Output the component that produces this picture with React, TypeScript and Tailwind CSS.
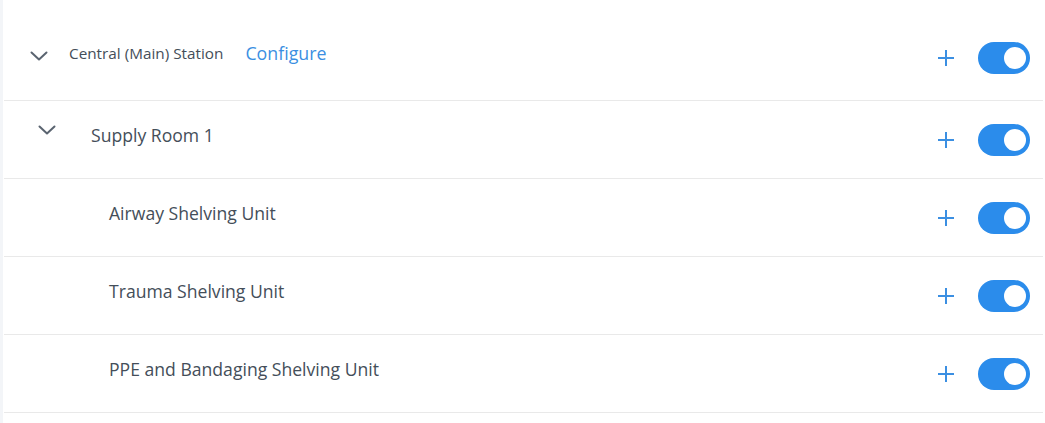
import { useState } from 'react';

type Unit = { id: string; name: string };

const units: Unit[] = [
  { id: 'airway', name: 'Airway Shelving Unit' },
  { id: 'trauma', name: 'Trauma Shelving Unit' },
  { id: 'ppe', name: 'PPE and Bandaging Shelving Unit' },
];

function Chevron({ className }: { className?: string }) {
  return (
    <svg width="18" height="10" viewBox="0 0 18 10" className={className} fill="none">
      <path d="M1.5 1.5 L9 8.5 L16.5 1.5" stroke="#5a6470" strokeWidth="2" strokeLinecap="round" strokeLinejoin="round" />
    </svg>
  );
}

function Plus() {
  return (
    <button className="w-[18px] h-[18px] flex items-center justify-center">
      <svg width="18" height="18" viewBox="0 0 18 18" fill="none">
        <path d="M9 1 V17 M1 9 H17" stroke="#3b8fe2" strokeWidth="2" />
      </svg>
    </button>
  );
}

function Toggle({ on, onChange }: { on: boolean; onChange: () => void }) {
  return (
    <button
      onClick={onChange}
      className={`w-[52px] h-[32px] rounded-full flex items-center px-[4px] ${
        on ? 'bg-[#2b8ceb] justify-end' : 'bg-[#c9cfd6] justify-start'
      }`}
    >
      <span className="w-[22px] h-[22px] rounded-full bg-white block" />
    </button>
  );
}

function Actions({ on, onChange }: { on: boolean; onChange: () => void }) {
  return (
    <div className="ml-auto flex items-center gap-[23px] pr-[13px]">
      <Plus />
      <Toggle on={on} onChange={onChange} />
    </div>
  );
}

export default function App() {
  const [enabled, setEnabled] = useState<Record<string, boolean>>({
    station: true,
    room: true,
    airway: true,
    trauma: true,
    ppe: true,
  });
  const flip = (k: string) => setEnabled((s) => ({ ...s, [k]: !s[k] }));

  return (
    <div className="w-[1045px] h-[423px] bg-white flex" style={{ fontFamily: '"Open Sans", sans-serif' }}>
      <div className="w-[3px] bg-[#f3f5f8]" />
      <div className="w-[1039px] ml-[1px]">
        <div className="h-[101px] pt-[16px] flex items-center border-b border-[#e9e9e9]">
          <div className="flex items-center mb-[9px]">
            <Chevron className="ml-[26px] mt-[4px]" />
            <span className="ml-[21px] text-[15.3px] text-[#444e59]">Central (Main) Station</span>
            <a className="ml-[22px] text-[17.8px] text-[#3b8fe2] cursor-pointer">Configure</a>
          </div>
          <Actions on={enabled.station} onChange={() => flip('station')} />
        </div>

        <div className="h-[78px] flex items-center border-b border-[#e9e9e9]">
          <div className="flex items-center mb-[8px]">
            <Chevron className="ml-[34px] mb-[10px]" />
            <span className="ml-[35px] text-[17.6px] text-[#444e59]">Supply Room 1</span>
          </div>
          <Actions on={enabled.room} onChange={() => flip('room')} />
        </div>

        {units.map((u) => (
          <div key={u.id} className="h-[78px] flex items-center border-b border-[#e9e9e9]">
            <span className="ml-[105px] mb-[8px] text-[17.6px] text-[#444e59]">{u.name}</span>
            <Actions on={enabled[u.id]} onChange={() => flip(u.id)} />
          </div>
        ))}
      </div>
    </div>
  );
}
